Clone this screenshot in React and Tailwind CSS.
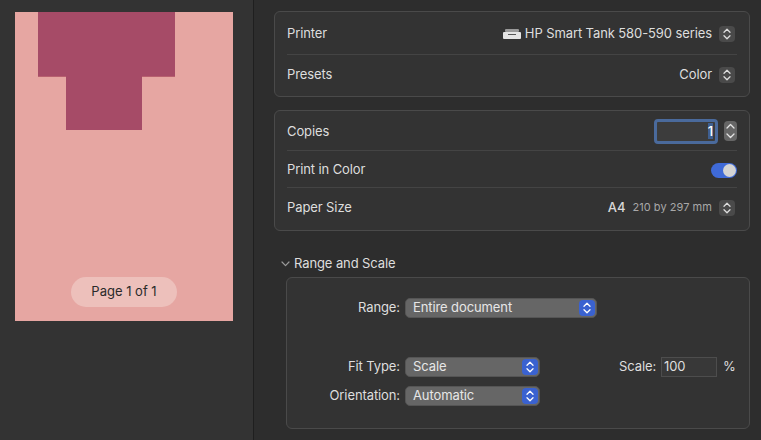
import React from 'react';

const sans = 'font-[Inter,"Liberation_Sans",sans-serif] tracking-[-0.1px]';

function Updown({ className = 'text-[#dcdcdc]' }) {
  return (
    <svg width="8" height="12" viewBox="0 0 8 12" fill="none" stroke="currentColor" strokeWidth="1.3" strokeLinecap="round" strokeLinejoin="round" className={className}>
      <path d="M1 4.2 4 1.2 7 4.2" />
      <path d="M1 7.8 4 10.8 7 7.8" />
    </svg>
  );
}

function Stepper() {
  return (
    <span className="mr-[2px] flex h-4 w-4 items-center justify-center rounded-[4px] bg-[#4a4a4a]">
      <Updown />
    </span>
  );
}

function Row({ label, children, border, className, labelClass = '' }) {
  return (
    <div className={`flex items-center justify-between ${className} ${border ? 'border-b border-[#444444]' : ''}`}>
      <span className={`text-[13px] text-[#dedede] ${labelClass}`}>{label}</span>
      <div className="flex items-center">{children}</div>
    </div>
  );
}

function Card({ children }) {
  return <div className="rounded-md border border-[#4a4a4a] bg-[#333333] pl-3 pr-[12px]">{children}</div>;
}

function PrinterIcon() {
  return (
    <svg width="18" height="10" viewBox="0 0 18 10" className="mr-[4px]">
      <rect x="2" y="0" width="14" height="3" rx="1" fill="#9a9a9a" />
      <rect x="0" y="3" width="18" height="7" rx="1" fill="#e4e4e4" />
      <rect x="5" y="5" width="8" height="1" fill="#555555" />
    </svg>
  );
}

function BlueSelect({ value, width }) {
  return (
    <div className={`flex h-5 ${width} items-center justify-between rounded-[5px] border border-[#555555] bg-[#666666] pl-[7px] pr-[1px]`}>
      <span className="-mt-[1px] text-[13px] text-[#e6e6e6]">{value}</span>
      <span className="flex h-4 w-4 items-center justify-center rounded-[4px] bg-[#3a62d0]">
        <Updown className="text-white" />
      </span>
    </div>
  );
}

export default function App() {
  return (
    <div className={`flex h-[440px] w-[761px] overflow-hidden bg-[#2d2d2d] ${sans}`}>
      {/* Preview */}
      <div className="h-full w-[254px] shrink-0 border-r border-[#1f1f1f] bg-[#333333] pl-[15px] pt-3">
        <div className="flex h-[309px] w-[218px] flex-col bg-[#e6a6a2]">
          <div className="ml-[23px] h-[65px] w-[137px] border-b border-[#b8606f] bg-[#a64b67]" />
          <div className="-mt-[1px] ml-[51px] h-[54px] w-[76px] bg-[#a64b67]" />
          <div className="mx-auto mt-[147px] flex h-[30px] w-[106px] items-center justify-center rounded-full bg-[#edc0bb] text-[13px] tracking-normal text-[#2a2a2a]">
            Page 1 of 1
          </div>
        </div>
      </div>

      {/* Settings */}
      <div className="flex-1 pl-5 pr-[11px] pt-[11px]">
        <Card>
          <Row label="Printer" border className="h-[43px] pt-[1px]">
            <PrinterIcon />
            <span className="text-[13px] text-[#dedede]">HP Smart Tank 580-590 series</span>
            <span className="ml-[7px]"><Stepper /></span>
          </Row>
          <Row label="Presets" className="h-[41px] pb-[2px]">
            <span className="text-[13px] text-[#dedede]">Color</span>
            <span className="ml-[7px]"><Stepper /></span>
          </Row>
        </Card>

        <div className="mt-[13px]">
          <Card>
            <Row label="Copies" border className="h-[40px] pt-[1px]" labelClass="mt-[2px]">
              <div className="flex h-[25px] w-[64px] items-center justify-end rounded-[4px] border-[3px] border-[#4a6a9c] bg-[#3c3c3c] pr-[2px]">
                <span className="bg-[#3f5f8f] text-[13px] font-medium leading-[16px] text-white">1</span>
              </div>
              <span className="ml-[6px] flex h-5 w-[13px] items-center justify-center rounded-[4px] bg-[#666666]">
                <svg width="9" height="16" viewBox="0 0 9 16" fill="none" stroke="#e4e4e4" strokeWidth="1.3" strokeLinecap="round" strokeLinejoin="round">
                  <path d="M1 5 4.5 1.5 8 5" />
                  <path d="M1 11 4.5 14.5 8 11" />
                </svg>
              </span>
            </Row>
            <Row label="Print in Color" border className="h-[37px] pt-[2px]">
              <div className="flex h-[15px] w-[26px] items-center justify-end rounded-full bg-[#3f6ad8] pr-[1px]">
                <span className="h-[13px] w-[13px] rounded-full bg-[#d4d4d4]" />
              </div>
            </Row>
            <Row label="Paper Size" className="h-[42px] pb-[3px]">
              <span className="text-[13px] font-medium text-[#d8d8d8]">A4</span>
              <span className="ml-[7px] text-[11px] tracking-[0.05px] text-[#a8a8a8]">210 by 297 mm</span>
              <span className="ml-[7px]"><Stepper /></span>
            </Row>
          </Card>
        </div>

        <div className="mt-[24px] flex h-[18px] items-center pl-[7px]">
          <svg width="9" height="6" viewBox="0 0 9 6" fill="none" stroke="#9a9a9a" strokeWidth="1.2" strokeLinecap="round" strokeLinejoin="round">
            <path d="M1 1 4.5 4.6 8 1" />
          </svg>
          <span className="ml-[4px] text-[13px] text-[#dedede]">Range and Scale</span>
        </div>

        <div className="ml-3 mt-[4px] h-[152px] rounded-md border border-[#4a4a4a] bg-[#333333] pt-5">
          <div className="flex items-center">
            <span className="w-[113px] text-right text-[13px] text-[#dedede]">Range:</span>
            <div className="ml-[5px]"><BlueSelect value="Entire document" width="w-[192px]" /></div>
          </div>
          <div className="mt-[39px] flex items-center">
            <span className="w-[113px] text-right text-[13px] text-[#dedede]">Fit Type:</span>
            <div className="ml-[5px]"><BlueSelect value="Scale" width="w-[135px]" /></div>
            <span className="ml-[79px] w-[37px] text-[13px] text-[#dedede]">Scale:</span>
            <div className="ml-[5px] flex h-5 w-[56px] items-center border border-[#4d4d4d] bg-[#383838] pl-[2px] text-[13px] text-[#dedede]">100</div>
            <span className="ml-[6px] text-[13px] text-[#dedede]">%</span>
          </div>
          <div className="mt-[9px] flex items-center">
            <span className="w-[113px] text-right text-[13px] text-[#dedede]">Orientation:</span>
            <div className="ml-[5px]"><BlueSelect value="Automatic" width="w-[135px]" /></div>
          </div>
        </div>
      </div>
    </div>
  );
}
